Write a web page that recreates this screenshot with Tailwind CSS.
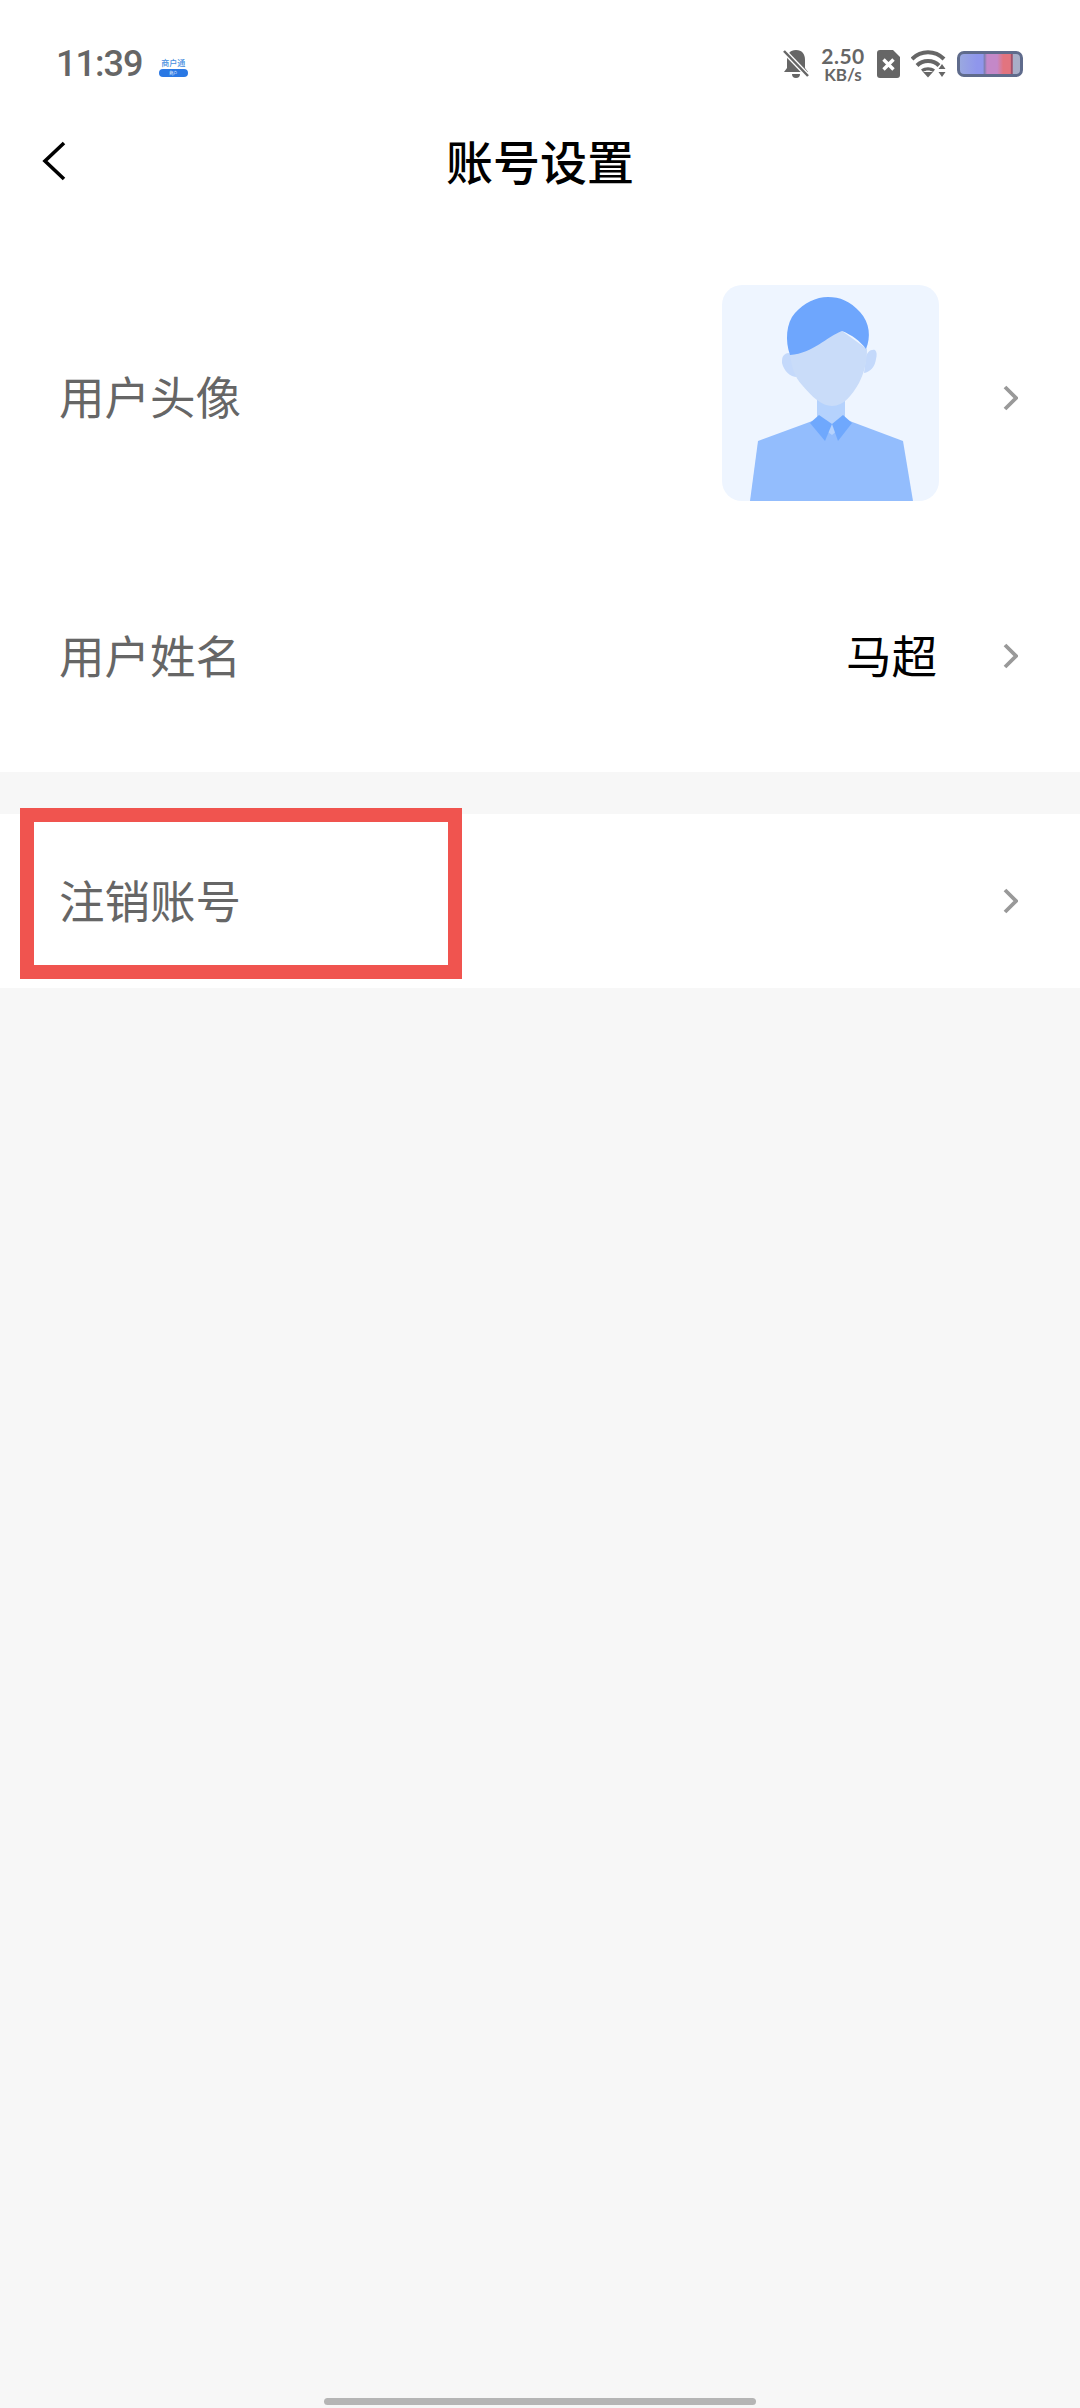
<!DOCTYPE html>
<html lang="zh">
<head>
<meta charset="utf-8">
<script src="https://cdn.jsdelivr.net/npm/@tailwindcss/browser@4"></script>
</head>
<body class="bg-[#f7f7f7] font-['Noto_Sans_CJK_SC','Noto_Sans',sans-serif]">
<div class="relative flex h-[2408px] w-[1080px] flex-col overflow-hidden bg-[#f7f7f7]">
  <div class="bg-white">
    <div class="flex h-[122px] items-center justify-between pl-[56px] pr-[57px] pt-[6px]">
      <div class="flex items-center gap-[16px]">
        <span class="font-['Roboto',sans-serif] text-[36px] leading-[40px] font-medium tracking-[-1px] text-[#666666]">11:39</span>
        <div class="flex w-[30px] flex-col items-center pt-[6px]">
          <span class="text-[8px] leading-[10px] font-medium text-[#4a8fe0]">商户通</span>
          <span class="mt-[1px] flex h-[8px] w-[29px] items-center justify-center rounded-full bg-[#2a78e4] text-[4px] leading-none text-white">商户</span>
        </div>
      </div>
      <div class="flex items-center">
        <svg class="h-[30px] w-[28px]" viewBox="0 0 28 30"><path d="M14 1c6 0 9 4 9 10v8l3 4H2l3-4v-8C5 5 8 1 14 1zM10 25h8a4 4 0 0 1-8 0z" fill="#666666"/><path d="M2 2l24 25" stroke="#ffffff" stroke-width="5"/><path d="M2 2l24 25" stroke="#666666" stroke-width="2.5"/></svg>
        <div class="ml-[10px] flex w-[46px] flex-col items-center font-['Lato',sans-serif] font-bold text-[#666666]">
          <span class="text-[21px] leading-[21px] tracking-[0.5px]">2.50</span>
          <span class="text-[17px] leading-[17px]">KB/s</span>
        </div>
        <svg class="ml-[11px] h-[28px] w-[23px]" viewBox="0 0 23 28"><path d="M3 0h13l7 7v18a3 3 0 0 1-3 3H3a3 3 0 0 1-3-3V3a3 3 0 0 1 3-3z" fill="#666666"/><path d="M6.500 9.500l10 10M16.500 9.500l-10 10" stroke="#ffffff" stroke-width="3.4"/></svg>
        <svg class="ml-[11px] h-[28px] w-[35px]" viewBox="0 0 35 28"><g fill="none" stroke="#666666" stroke-width="4"><path d="M1 9c9-9 23-9 32 0"/><path d="M6 15.500c6-6 16-6 22 0"/></g><path d="M10 19.500c4-3 10-3 14 0l-2 2.500c-3-2-7-2-10 0z" fill="#666666"/><path d="M12 22h10l-5 5.500z" fill="#666666"/><path d="M31 14l3.500 5h-7zM27.500 22h7l-3.500 5z" fill="#666666"/></svg>
        <div class="ml-[11px] h-[26px] w-[66px] rounded-[7px] border-[3px] border-[#5f6b8c] bg-[linear-gradient(90deg,#9aa8e0_0%,#8f96ec_28%,#8f96ec_38%,#7f7fb0_41%,#c488c8_45%,#c488c8_62%,#e2747f_72%,#e2747f_84%,#a0506a_85%,#a0506a_87%,#a8aec8_89%)]"></div>
      </div>
    </div>
    <div class="relative flex h-[80px] items-center justify-center">
      <svg class="absolute left-[42px] top-[19px] h-[40px] w-[24px]" viewBox="0 0 24 40"><path d="M22 2L3 20l19 18" fill="none" stroke="#000000" stroke-width="3.6"/></svg>
      <span class="mb-[5px] text-[47px] leading-[60px] font-medium text-black">账号设置</span>
    </div>
    <div class="h-[54px]"></div>
    <div class="flex h-[284px] items-center pl-[59px] pr-[62px]">
      <span class="mb-[7px] text-[45.5px] leading-[60px] text-[#666666]">用户头像</span>
      <svg class="ml-auto mb-[10px] h-[216px] w-[217px]" viewBox="0 0 217 216">
        <rect width="217" height="216" rx="20" fill="#eef5ff"/>
        <path d="M36 156L93 135H125L181 156L191 216H28Z" fill="#93bdfd"/>
        <path d="M95 112H123V139L110 150L95 139Z" fill="#b5d2fd"/>
        <path d="M62 70C66 66 70 68 72 74L75 92C68 92 62 86 60 78C60 74 60 72 62 70Z" fill="#c4d9fb"/>
        <path d="M153 65C148 64 145 68 144 72L142 88C148 87 153 82 154 74C155 70 155 67 153 65Z" fill="#c4d9fb"/>
        <path d="M68 70C70 84 73 92 80 100C90 112 100 121 110 121C122 121 130 110 137 98C142 88 145 78 145 64L120 46L90 50Z" fill="#c9dcf9"/>
        <path d="M68 70C92 68 104 52 120 46C130 50 138 56 144 64C149 52 148 38 138 27C128 16 118 12 106 12C94 12 82 18 73 28C64 38 63 56 68 70Z" fill="#6ea6fd"/>
        <path d="M88 138L97 130L110 139L103 156Z" fill="#6fa8fd"/>
        <path d="M130 138L121 130L110 139L116 156Z" fill="#6fa8fd"/>
      </svg>
      <svg class="ml-[64px] h-[26px] w-[15px]" viewBox="0 0 15 26"><path d="M2 2l11 11L2 24" fill="none" stroke="#999999" stroke-width="3.800"/></svg>
    </div>
    <div class="flex h-[232px] items-center pl-[59px] pr-[62px]">
      <span class="mb-[5px] text-[45.5px] leading-[60px] text-[#666666]">用户姓名</span>
      <span class="mb-[5px] ml-auto text-[45.5px] leading-[60px] text-black">马超</span>
      <svg class="ml-[66px] h-[26px] w-[15px]" viewBox="0 0 15 26"><path d="M2 2l11 11L2 24" fill="none" stroke="#999999" stroke-width="3.800"/></svg>
    </div>
  </div>
  <div class="mt-[42px] flex h-[174px] items-center bg-white pl-[59px] pr-[62px]">
    <span class="mb-[5px] text-[45.5px] leading-[60px] text-[#666666]">注销账号</span>
    <svg class="ml-auto h-[26px] w-[15px]" viewBox="0 0 15 26"><path d="M2 2l11 11L2 24" fill="none" stroke="#999999" stroke-width="3.800"/></svg>
  </div>
  <div class="absolute left-[20px] top-[808px] h-[171px] w-[442px] border-[14px] border-[#f0544f]"></div>
  <div class="mt-auto mb-[3px] h-[7px] w-[432px] self-center rounded-full bg-[#b5b5b5]"></div>
</div>
</body>
</html>
